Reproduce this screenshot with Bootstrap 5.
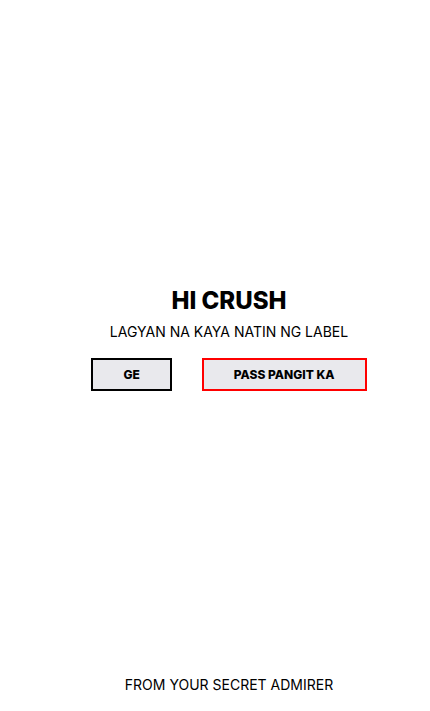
<!DOCTYPE html>
<html lang="tl">
<head>
<meta charset="utf-8">
<meta name="viewport" content="width=device-width, initial-scale=1">
<title>Hi Crush</title>
<link href="https://cdn.jsdelivr.net/npm/bootstrap@5.3.0/dist/css/bootstrap.min.css" rel="stylesheet">
<style>
body { font-family: Inter, "Open Sans", sans-serif; font-size: 14px; line-height: 20px; color: #000; background: #fff; padding-left: 28px; }
main { padding-top: 2px; }
.headline { font-size: 24px; line-height: 30px; font-weight: 800; margin-bottom: 6px; }
.choices { gap: 30px; }
.choice { --bs-btn-font-size: 12px; --bs-btn-font-weight: 800; --bs-btn-line-height: 17px; --bs-btn-padding-x: 30px; --bs-btn-padding-y: 6px;
  --bs-btn-border-width: 2px; --bs-btn-border-radius: 0; --bs-btn-color: #000; --bs-btn-bg: #e9e9ed; --bs-btn-border-color: #000;
  --bs-btn-hover-color: #000; --bs-btn-hover-bg: #d9d9df; --bs-btn-hover-border-color: #000; }
.choice-pass { --bs-btn-border-color: #f00; --bs-btn-hover-border-color: #f00; }
</style>
</head>
<body class="d-flex flex-column min-vh-100 text-center">
<main class="flex-grow-1 d-flex flex-column justify-content-center align-items-center">
  <h1 class="headline">HI CRUSH</h1>
  <p class="mb-3">LAGYAN NA KAYA NATIN NG LABEL</p>
  <div class="choices d-flex justify-content-center">
    <button type="button" class="btn choice">GE</button>
    <button type="button" class="btn choice choice-pass">PASS PANGIT KA</button>
  </div>
</main>
<footer class="pb-3">FROM YOUR SECRET ADMIRER</footer>
<script src="https://cdn.jsdelivr.net/npm/bootstrap@5.3.0/dist/js/bootstrap.bundle.min.js"></script>
</body>
</html>
